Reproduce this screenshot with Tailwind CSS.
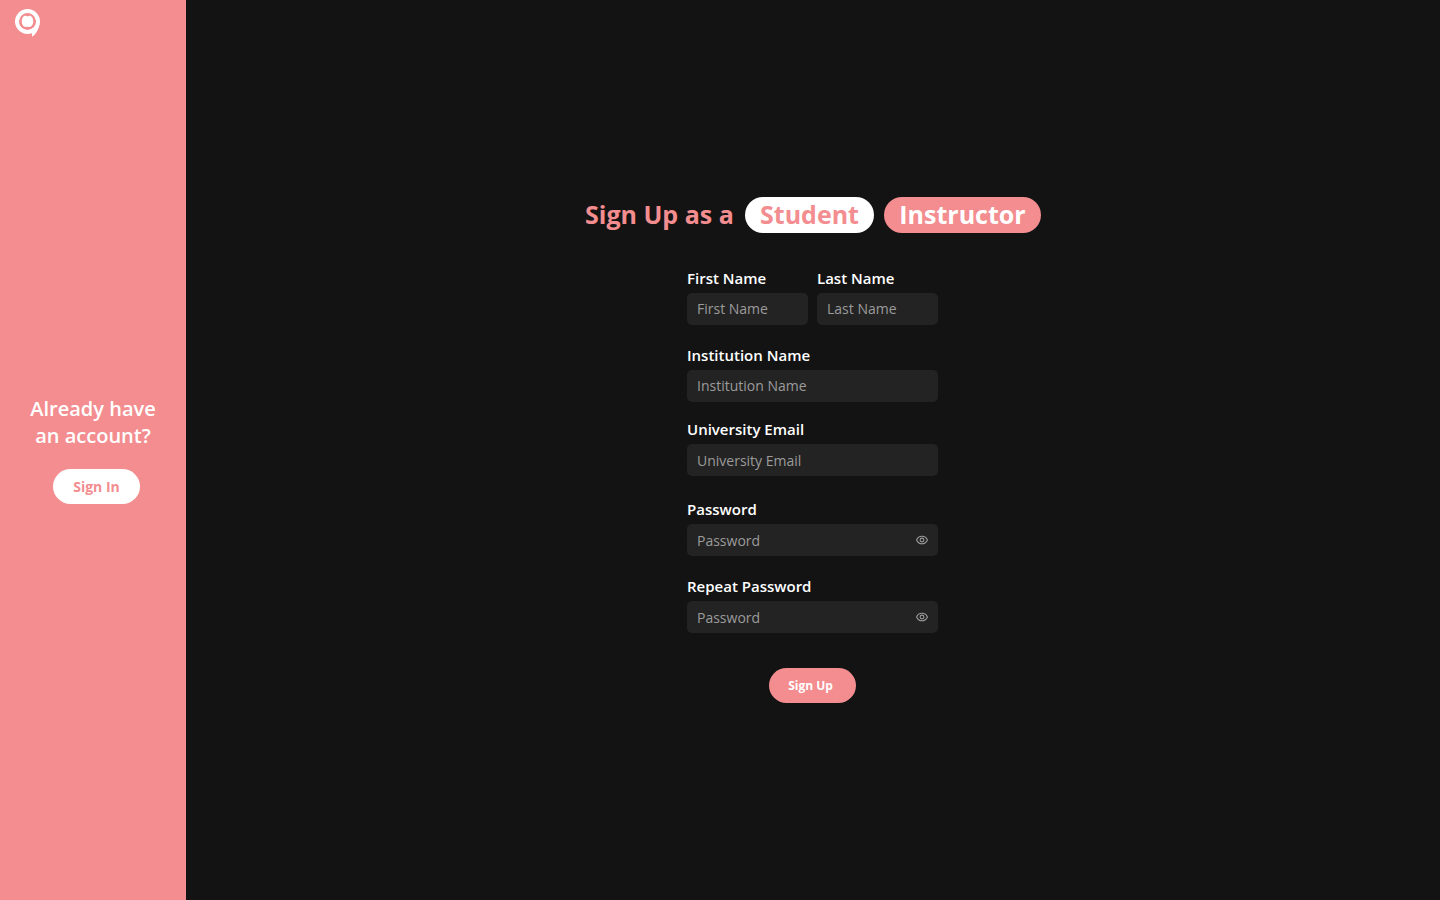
<!DOCTYPE html>
<html lang="en">
<head>
  <meta charset="UTF-8" />
  <meta name="viewport" content="width=device-width, initial-scale=1.0" />
  <title>Sign Up</title>
  <script src="https://cdn.jsdelivr.net/npm/@tailwindcss/browser@4"></script>
</head>
<body class="flex h-screen overflow-hidden bg-[#131313] font-['Open_Sans',sans-serif] text-white">

  <!-- Sidebar -->
  <aside class="flex w-[186px] shrink-0 flex-col bg-[#f38d8f]">
    <svg class="ml-[14px] mt-[8px] size-[30px] shrink-0" viewBox="0 0 30 30" fill="none">
      <circle cx="13.5" cy="13.5" r="10.4" stroke="#fff" stroke-width="4.2" />
      <path d="M14 24.500 L25.500 16 C24.500 21.500 22 26 18.200 28.800 L17.800 25 Z" fill="#fff" />
      <circle cx="13.5" cy="13.5" r="8.3" fill="#f38d8f" />
      <path d="M13.500 8.400 C15.200 7 19.200 7.600 19.200 13.300 C19.200 18.800 15.500 19.800 13.500 18.400 C11.500 19.800 7.800 18.800 7.800 13.300 C7.800 7.600 11.800 7 13.500 8.400 Z" fill="#fff" />
    </svg>
    <p class="mt-[357px] text-center text-xl/[27px] font-semibold">Already have<br />an account?</p>
    <button class="ml-[53px] mt-[20px] h-[35px] w-[87px] rounded-full bg-white text-sm font-bold text-[#f38d8f]">Sign In</button>
  </aside>

  <!-- Form -->
  <main class="flex grow flex-col items-center pt-[197px]">
    <div class="flex h-9 text-[25px]/[34px] font-bold text-[#f38d8f]">
      <h1 class="w-[160px]">Sign Up as a</h1>
      <button class="w-[129px] rounded-full bg-white pb-[2px]">Student</button>
      <button class="ml-[10px] w-[157px] rounded-full bg-[#f38d8f] pb-[2px] text-white">Instructor</button>
    </div>

    <form class="mr-px mt-[35px] flex w-[251px] flex-col text-[15px]/5 font-semibold">
      <div class="flex gap-[9px]">
        <label class="w-[121px]">First Name
          <input type="text" placeholder="First Name" class="mt-[5px] block h-8 w-full rounded-[5px] bg-[#232323] px-[10px] pb-[2px] text-sm font-normal placeholder:text-[#9b9b9b]" />
        </label>
        <label class="w-[121px]">Last Name
          <input type="text" placeholder="Last Name" class="mt-[5px] block h-8 w-full rounded-[5px] bg-[#232323] px-[10px] pb-[2px] text-sm font-normal placeholder:text-[#9b9b9b]" />
        </label>
      </div>
      <label class="mt-[20px]">Institution Name
        <input type="text" placeholder="Institution Name" class="mt-[5px] block h-8 w-full rounded-[5px] bg-[#232323] px-[10px] pb-[2px] text-sm font-normal placeholder:text-[#9b9b9b]" />
      </label>
      <label class="mt-[17px]">University Email
        <input type="email" placeholder="University Email" class="mt-[5px] block h-8 w-full rounded-[5px] bg-[#232323] px-[10px] text-sm font-normal placeholder:text-[#9b9b9b]" />
      </label>
      <label class="mt-[23px]">Password
        <span class="mt-[5px] flex h-8 rounded-[5px] bg-[#232323] px-[10px]">
          <input type="password" placeholder="Password" class="min-w-0 grow pt-px text-sm font-normal placeholder:text-[#9b9b9b]" />
          <svg class="mt-[11px] h-[10px] w-3 shrink-0" viewBox="0 0 12 10" fill="none" stroke="#9b9b9b" stroke-width="1.1">
            <path d="M.6 5C1.500 2.600 3.500 1.200 6 1.200S10.500 2.600 11.400 5C10.500 7.400 8.500 8.800 6 8.800S1.500 7.400 .6 5Z" />
            <circle cx="6" cy="5" r="1.900" />
          </svg>
        </span>
      </label>
      <label class="mt-[20px]">Repeat Password
        <span class="mt-[5px] flex h-8 rounded-[5px] bg-[#232323] px-[10px]">
          <input type="password" placeholder="Password" class="min-w-0 grow pt-px text-sm font-normal placeholder:text-[#9b9b9b]" />
          <svg class="mt-[11px] h-[10px] w-3 shrink-0" viewBox="0 0 12 10" fill="none" stroke="#9b9b9b" stroke-width="1.1">
            <path d="M.6 5C1.500 2.600 3.500 1.200 6 1.200S10.500 2.600 11.400 5C10.500 7.400 8.500 8.800 6 8.800S1.500 7.400 .6 5Z" />
            <circle cx="6" cy="5" r="1.900" />
          </svg>
        </span>
      </label>
      <button type="button" class="ml-[82px] mt-[35px] h-[35px] w-[87px] rounded-full bg-[#f38d8f] pr-1 text-xs font-bold">Sign Up</button>
    </form>
  </main>
</body>
</html>
